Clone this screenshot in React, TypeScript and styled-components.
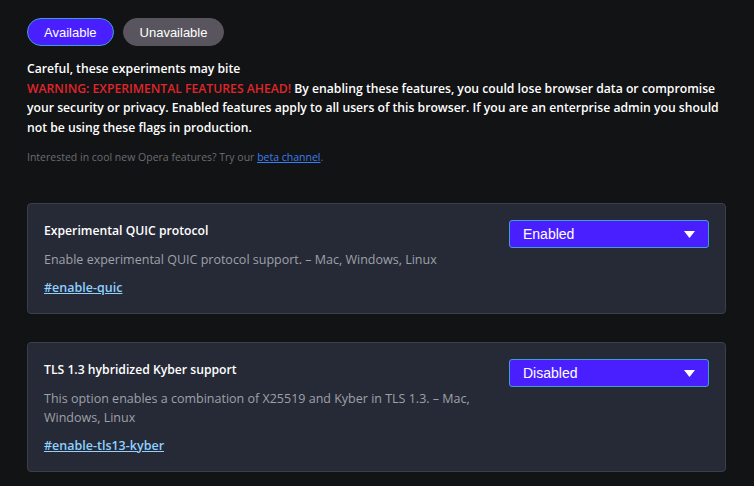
import React from 'react';
import styled, { createGlobalStyle } from 'styled-components';

const GlobalStyle = createGlobalStyle`
  html, body {
    margin: 0;
    padding: 0;
    background: #121315;
  }
  body {
    font-family: "Open Sans", "Noto Sans", sans-serif;
    color: #ffffff;
  }
`;

const Page = styled.div`
  padding: 18px 28px 20px 27px;
  min-height: 486px;
  box-sizing: border-box;
`;

const Tabs = styled.div`
  display: flex;
  gap: 9px;
  margin-bottom: 13px;
`;

const Tab = styled.button<{ $active?: boolean }>`
  height: 28px;
  padding: 0 16px;
  border-radius: 14px;
  font-family: "Liberation Sans", Arial, sans-serif;
  font-size: 13px;
  color: #ffffff;
  cursor: pointer;
  background: ${(p) => (p.$active ? '#4a1fff' : '#58555e')};
  border: 1px solid ${(p) => (p.$active ? '#3f9fcf' : '#58555e')};
`;

const Careful = styled.div`
  font-size: 12.2px;
  font-weight: 600;
  line-height: 19.5px;
`;

const Warning = styled.p`
  margin: 0;
  font-size: 12.2px;
  font-weight: 600;
  line-height: 19.5px;
`;

const Red = styled.span`
  color: #e0252b;
`;

const Hint = styled.p`
  margin: 12px 0 0;
  font-size: 10.5px;
  line-height: 16px;
  color: #6a6d72;
`;

const HintLink = styled.a`
  color: #3a7ff0;
  text-decoration: underline;
`;

const Flags = styled.div`
  display: flex;
  flex-direction: column;
  gap: 28px;
  margin-top: 38px;
`;

const Card = styled.div`
  display: flex;
  align-items: flex-start;
  gap: 24px;
  background: #262a37;
  border: 1px solid #3b3f4b;
  border-radius: 4px;
  padding: 16px 16px 16px 16px;
`;

const Info = styled.div`
  flex: 1;
  min-width: 0;
  padding-top: 1px;
`;

const Title = styled.div`
  font-size: 12.2px;
  font-weight: 600;
  line-height: 19.5px;
  margin-bottom: 9px;
`;

const Desc = styled.div`
  font-size: 12.5px;
  line-height: 19px;
  color: #9ea1a8;
  margin-bottom: 6px;
`;

const FlagLink = styled.a`
  font-size: 12.5px;
  font-weight: 600;
  line-height: 19.5px;
  color: #8fd1ff;
  text-decoration: underline;
`;

const Select = styled.div`
  width: 200px;
  height: 28px;
  box-sizing: border-box;
  display: flex;
  align-items: center;
  justify-content: space-between;
  padding: 0 13px 0 13px;
  background: #4a1fff;
  border: 1px solid #3f9fcf;
  border-radius: 3px;
  font-family: "Liberation Sans", Arial, sans-serif;
  font-size: 14px;
  color: #ffffff;
  flex-shrink: 0;
`;

const Caret = () => (
  <svg width="11" height="7" viewBox="0 0 11 7">
    <path d="M0 0h11L5.5 7z" fill="#ffffff" />
  </svg>
);

interface FlagProps {
  title: string;
  desc: string;
  id: string;
  value: string;
}

const Flag: React.FC<FlagProps> = ({ title, desc, id, value }) => (
  <Card>
    <Info>
      <Title>{title}</Title>
      <Desc>{desc}</Desc>
      <FlagLink href={'#' + id}>#{id}</FlagLink>
    </Info>
    <Select>
      {value}
      <Caret />
    </Select>
  </Card>
);

const App: React.FC = () => {
  return (
    <Page>
      <GlobalStyle />
      <Tabs>
        <Tab $active>Available</Tab>
        <Tab>Unavailable</Tab>
      </Tabs>
      <Careful>Careful, these experiments may bite</Careful>
      <Warning>
        <Red>WARNING: EXPERIMENTAL FEATURES AHEAD!</Red> By enabling these features, you could lose browser data or
        compromise your security or privacy. Enabled features apply to all users of this browser. If you are an
        enterprise admin you should not be using these flags in production.
      </Warning>
      <Hint>
        Interested in cool new Opera features? Try our <HintLink href="#">beta channel</HintLink>.
      </Hint>
      <Flags>
        <Flag
          title="Experimental QUIC protocol"
          desc="Enable experimental QUIC protocol support. – Mac, Windows, Linux"
          id="enable-quic"
          value="Enabled"
        />
        <Flag
          title="TLS 1.3 hybridized Kyber support"
          desc="This option enables a combination of X25519 and Kyber in TLS 1.3. – Mac, Windows, Linux"
          id="enable-tls13-kyber"
          value="Disabled"
        />
      </Flags>
    </Page>
  );
};

export default App;
